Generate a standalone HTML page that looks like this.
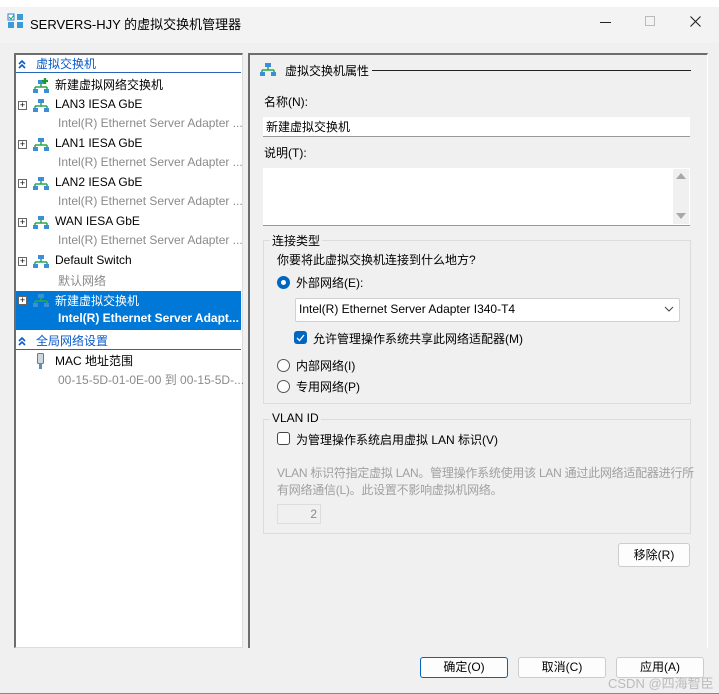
<!DOCTYPE html>
<html><head><meta charset="utf-8"><style>
*{margin:0;padding:0;box-sizing:border-box}
body{width:719px;height:694px;background:#fff;font-family:"Liberation Sans","Noto Sans CJK SC",sans-serif;font-size:12px;color:#000;position:relative;overflow:hidden}
.a{position:absolute;white-space:nowrap}
.t{margin-top:-1px}
.win{position:absolute;left:0;top:7px;width:719px;height:687px;background:#f0f0f0;border-top:1px solid #ccc;border-bottom:1px solid #888}
.title{position:absolute;left:0;top:7px;width:719px;height:36px;background:#f3f3f3}
.lp{position:absolute;left:14px;top:53px;width:229px;height:595px;background:#fff;border-left:2px solid #6d6d6d;border-top:2px solid #6d6d6d;border-right:1px solid #ddd;border-bottom:1px solid #ddd}
.rp{position:absolute;left:248px;top:53px;width:460px;height:595px;border-left:2px solid #6d6d6d;border-top:2px solid #6d6d6d;border-right:1px solid #fff}
.g{color:#8a8a8a}
.box{position:absolute;background:#fff;border-bottom:1px solid #999}
.grp{position:absolute;border:1px solid #dcdcdc}
.btn{position:absolute;background:#fdfdfd;border:1px solid #ccc;border-radius:3px;text-align:center;line-height:20px}
.plus{position:absolute;left:18px;width:9px;height:9px;border:1px solid #666;font-size:9px;line-height:7px;text-align:center;background:#fff}
</style></head><body>
<div class="win"></div>
<div class="title"></div>
<svg class="a" style="left:7px;top:13px" width="18" height="16"><rect x="1" y="1" width="6" height="6" fill="#fff" stroke="#3a7bd5"/><path d="M2 4l2 2 3-4" stroke="#0a6" fill="none"/><rect x="10" y="1" width="6" height="6" fill="#3a9bdc"/><rect x="1" y="9" width="6" height="6" fill="#3a9bdc"/><rect x="10" y="9" width="6" height="6" fill="#3a9bdc"/></svg>
<div class="a" style="left:30px;top:14px;font-size:13px">SERVERS-HJY 的虚拟交换机管理器</div>
<div class="a" style="left:600px;top:22px;width:11px;height:1px;background:#222"></div>
<div class="a" style="left:645px;top:16px;width:10px;height:10px;border:1px solid #bbb"></div>
<svg class="a" style="left:690px;top:16px" width="11" height="11"><path d="M0.5 0.5l10 10M10.5 0.5l-10 10" stroke="#222" stroke-width="1.1"/></svg>

<div class="lp"></div>
<div class="rp"></div>

<svg width="0" height="0" style="position:absolute"><defs>
<g id="net"><rect x="5" y="0" width="6" height="4" fill="#3a8fd8"/><path d="M8 4v3M2 7h12M2 7v2M14 7v2" stroke="#2aa84a" stroke-width="1.5" fill="none"/><rect x="0" y="9" width="5" height="4" fill="#3a8fd8"/><rect x="11" y="9" width="5" height="4" fill="#3a8fd8"/></g>
<g id="chev"><path d="M1 4l3-3 3 3M1 8l3-3 3 3" stroke="#0a5ac8" stroke-width="1.6" fill="none"/></g>
</defs></svg>

<svg class="a" style="left:18px;top:60px" width="8" height="9"><use href="#chev"/></svg>
<div class="a t" style="left:36px;top:56px;color:#0a5ac8">虚拟交换机</div>
<div class="a" style="left:16px;top:72px;width:225px;height:1px;background:#2a66b8"></div>

<svg class="a" style="left:33px;top:78px" width="18" height="15"><use href="#net" y="2"/><path d="M12 0v6M9 3h6" stroke="#1a9a2a" stroke-width="2.2"/></svg>
<div class="a t" style="left:55px;top:77px">新建虚拟网络交换机</div>

<div class="plus" style="top:101px">+</div><svg class="a" style="left:33px;top:99px" width="16" height="13"><use href="#net"/></svg>
<div class="a t" style="left:55px;top:98px">LAN3 IESA GbE</div><div class="a g t" style="left:58px;top:117px">Intel(R) Ethernet Server Adapter ...</div>
<div class="plus" style="top:140px">+</div><svg class="a" style="left:33px;top:138px" width="16" height="13"><use href="#net"/></svg>
<div class="a t" style="left:55px;top:137px">LAN1 IESA GbE</div><div class="a g t" style="left:58px;top:156px">Intel(R) Ethernet Server Adapter ...</div>
<div class="plus" style="top:179px">+</div><svg class="a" style="left:33px;top:177px" width="16" height="13"><use href="#net"/></svg>
<div class="a t" style="left:55px;top:176px">LAN2 IESA GbE</div><div class="a g t" style="left:58px;top:195px">Intel(R) Ethernet Server Adapter ...</div>
<div class="plus" style="top:218px">+</div><svg class="a" style="left:33px;top:216px" width="16" height="13"><use href="#net"/></svg>
<div class="a t" style="left:55px;top:215px">WAN IESA GbE</div><div class="a g t" style="left:58px;top:234px">Intel(R) Ethernet Server Adapter ...</div>
<div class="plus" style="top:257px">+</div><svg class="a" style="left:33px;top:255px" width="16" height="13"><use href="#net"/></svg>
<div class="a t" style="left:55px;top:254px">Default Switch</div><div class="a g t" style="left:58px;top:273px">默认网络</div>

<div class="a" style="left:16px;top:291px;width:225px;height:39px;background:#0078d7"></div>
<div class="plus" style="top:296px">+</div><svg class="a" style="left:33px;top:294px" width="16" height="13"><use href="#net"/></svg>
<div class="a t" style="left:55px;top:293px;color:#fff">新建虚拟交换机</div>
<div class="a t" style="left:58px;top:312px;color:#fff;font-weight:bold">Intel(R) Ethernet Server Adapt...</div>

<svg class="a" style="left:18px;top:337px" width="8" height="9"><use href="#chev"/></svg>
<div class="a t" style="left:36px;top:333px;color:#0a5ac8">全局网络设置</div>
<div class="a" style="left:16px;top:349px;width:225px;height:1px;background:#2a66b8"></div>
<svg class="a" style="left:36px;top:353px" width="9" height="17"><rect x="1.5" y="0.5" width="6" height="10" rx="1" fill="#cfd6dc" stroke="#6a7a88"/><rect x="3" y="10" width="3" height="6" fill="#5a8fc0"/></svg>
<div class="a t" style="left:55px;top:353px">MAC 地址范围</div>
<div class="a g t" style="left:58px;top:372px">00-15-5D-01-0E-00 到 00-15-5D-...</div>

<!-- right -->
<svg class="a" style="left:260px;top:63px" width="16" height="13"><use href="#net"/></svg>
<div class="a t" style="left:285px;top:63px">虚拟交换机属性</div>
<div class="a" style="left:372px;top:70px;width:319px;height:1px;background:#222"></div>
<div class="a t" style="left:264px;top:94px">名称(N):</div>
<div class="box" style="left:263px;top:117px;width:427px;height:20px"></div>
<div class="a t" style="left:266px;top:119px">新建虚拟交换机</div>
<div class="a t" style="left:264px;top:145px">说明(T):</div>
<div class="box" style="left:263px;top:168px;width:427px;height:58px"></div>
<div class="a" style="left:673px;top:169px;width:16px;height:55px;background:#f0f0f0"></div>
<div class="a" style="left:676px;top:173px;width:0;height:0;border-left:5px solid transparent;border-right:5px solid transparent;border-bottom:6px solid #a8a8a8"></div>
<div class="a" style="left:676px;top:213px;width:0;height:0;border-left:5px solid transparent;border-right:5px solid transparent;border-top:6px solid #a8a8a8"></div>

<div class="grp" style="left:263px;top:240px;width:428px;height:164px"></div>
<div class="a t" style="left:270px;top:233px;background:#f0f0f0;padding:0 2px">连接类型</div>
<div class="a t" style="left:277px;top:252px">你要将此虚拟交换机连接到什么地方?</div>
<div class="a" style="left:277px;top:276px;width:13px;height:13px;border-radius:50%;border:4px solid #0067c0;background:#fff"></div>
<div class="a t" style="left:296px;top:275px">外部网络(E):</div>
<div class="a" style="left:295px;top:298px;width:385px;height:24px;background:#fff;border:1px solid #d0d0d0;border-radius:2px"></div>
<div class="a t" style="left:299px;top:303px">Intel(R) Ethernet Server Adapter I340-T4</div>
<svg class="a" style="left:664px;top:306px" width="10" height="7"><path d="M1 1l4 4 4-4" stroke="#444" fill="none"/></svg>
<div class="a" style="left:294px;top:331px;width:13px;height:13px;border-radius:3px;background:#0067c0"></div>
<svg class="a" style="left:294px;top:331px" width="13" height="13"><path d="M3 7l2.5 2.5L10 4" stroke="#fff" stroke-width="1.3" fill="none"/></svg>
<div class="a t" style="left:313px;top:331px">允许管理操作系统共享此网络适配器(M)</div>
<div class="a" style="left:277px;top:359px;width:13px;height:13px;border-radius:50%;border:1px solid #555;background:#fff"></div>
<div class="a t" style="left:296px;top:358px">内部网络(I)</div>
<div class="a" style="left:277px;top:380px;width:13px;height:13px;border-radius:50%;border:1px solid #555;background:#fff"></div>
<div class="a t" style="left:296px;top:379px">专用网络(P)</div>

<div class="grp" style="left:263px;top:419px;width:428px;height:115px"></div>
<div class="a t" style="left:270px;top:412px;background:#f0f0f0;padding:0 2px">VLAN ID</div>
<div class="a" style="left:277px;top:432px;width:13px;height:13px;border-radius:3px;border:1px solid #444;background:#fff"></div>
<div class="a t" style="left:296px;top:432px">为管理操作系统启用虚拟 LAN 标识(V)</div>
<div class="a t" style="left:277px;top:465px;color:#a0a0a0;letter-spacing:-0.25px">VLAN 标识符指定虚拟 LAN。管理操作系统使用该 LAN 通过此网络适配器进行所</div>
<div class="a t" style="left:277px;top:482px;color:#a0a0a0;letter-spacing:-0.25px">有网络通信(L)。此设置不影响虚拟机网络。</div>
<div class="a" style="left:277px;top:504px;width:44px;height:20px;border:1px solid #ddd;text-align:right;padding-right:3px;color:#888;line-height:18px">2</div>

<div class="btn" style="left:618px;top:543px;width:72px;height:24px;line-height:22px">移除(R)</div>

<div class="btn" style="left:420px;top:657px;width:88px;height:21px;border-color:#0067c0;line-height:19px">确定(O)</div>
<div class="btn" style="left:518px;top:657px;width:88px;height:21px;line-height:19px">取消(C)</div>
<div class="btn" style="left:616px;top:657px;width:88px;height:21px;line-height:19px">应用(A)</div>
<div class="a" style="left:608px;top:673px;color:#bbb;font-size:13px">CSDN @四海智臣</div>
</body></html>
